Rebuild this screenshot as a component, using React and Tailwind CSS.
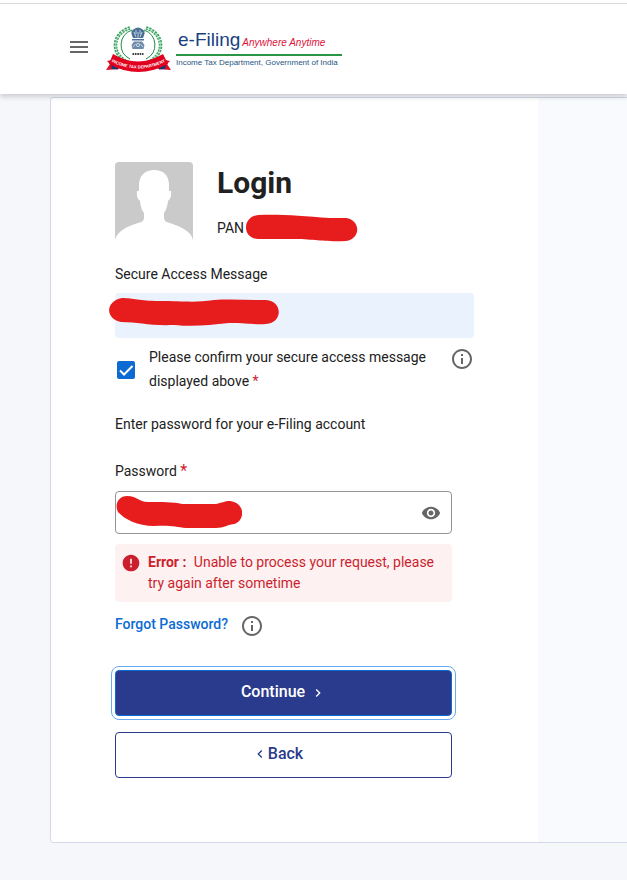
import { MdChevronLeft, MdChevronRight, MdError, MdInfoOutline, MdMenu, MdVisibility } from "react-icons/md";

function Wreath() {
  return (
    <g fill="none">
      <path d="M24 2 A20 18 0 0 0 22 36" stroke="#3aa35f" strokeWidth="3.6" strokeDasharray="2.2 1" />
      <path d="M40 2 A20 18 0 0 1 42 36" stroke="#3aa35f" strokeWidth="3.6" strokeDasharray="2.2 1" />
      <path d="M24 2 A20 18 0 0 0 22 36 M40 2 A20 18 0 0 1 42 36" stroke="#b9dfc6" strokeWidth="0.8" />
      <path d="M26 4 A17 16 0 0 0 24 33 M38 4 A17 16 0 0 1 40 33" stroke="#1f8a48" strokeWidth="1" />
    </g>
  );
}

function Emblem() {
  return (
    <svg viewBox="0 0 66 47" className="h-[47px] w-[66px] shrink-0" role="img" aria-label="Income Tax Department emblem">
      <Wreath />
      <g fill="#4a6f95">
        <path d="M28 3 Q32 0 36 3 L38.5 5 V8 L37 12 H27 L25.500 8 V5Z" />
        <path d="M26 13 H38 V14.500 H26Z" />
        <path d="M28 15.500 H36 L38.500 19 L37.500 23 H26.500 L25.500 19Z" opacity="0.8" />
      </g>
      <g fill="none" stroke="#dbe6f0" strokeWidth="0.8">
        <path d="M30 4 V8 M34 4 V8 M28 6 L30 11 M36 6 L34 11 M32 6 V12" />
        <circle cx="32" cy="19" r="1.6" />
        <path d="M27 21 L29.500 18 M37 21 L34.500 18" />
      </g>
      <path d="M26.500 28 H37.500" stroke="#3b3b3b" strokeWidth="2" strokeDasharray="1.6 .8" />
      <path d="M0 44 L4 38 L1 35 L10 33 L13 43Z M65 44 L61 38 L64 35 L55 33 L52 43Z" fill="#d80f28" />
      <path d="M5 38 L12 40 L12 43.500 L6 43Z M60 38 L53 40 L53 43.500 L59 43Z" fill="#123a72" />
      <path d="M7 28 Q32 43 57 28 L62 38 Q32 54 3 38Z" fill="#e2001f" />
      <path id="ribbon-line" d="M4 35 Q32 50 61 35" fill="none" />
      <text fontFamily="Liberation Sans, sans-serif" fontSize="4.2" fontWeight="700" fill="#fff" textAnchor="middle">
        <textPath href="#ribbon-line" startOffset="50%">INCOME TAX DEPARTMENT</textPath>
      </text>
    </svg>
  );
}

function Header() {
  return (
    <header className="relative z-10 bg-white pt-[3px] shadow-[0_3px_5px_rgba(0,0,0,0.16)]">
      <div className="flex h-[91px] items-center border-t border-[#dcdcdf] pl-[67px]">
        <button type="button" aria-label="Menu" className="mt-[-4px] text-[#666]">
          <MdMenu size={24} />
        </button>
        <a href="#" className="ml-[15px] flex items-center gap-1">
          <Emblem />
          <span className="flex flex-col font-['Liberation_Sans',Arial,sans-serif] whitespace-nowrap">
            <span className="flex items-baseline gap-[2px] border-b-2 border-[#2a9447] pl-[2px] leading-[22px]">
              <span className="text-[19px] text-[#17417f]">e-Filing</span>
              <span className="text-[10px] text-[#e0103a] italic">Anywhere Anytime</span>
            </span>
            <span className="pr-1 text-[8px] leading-[14px] text-[#1f5583]">
              Income Tax Department, Government of India
            </span>
          </span>
        </a>
      </div>
    </header>
  );
}

function Avatar() {
  return (
    <svg viewBox="0 0 78 78" className="size-[78px] shrink-0" role="img" aria-label="Profile picture">
      <path d="M0 78 V4 Q0 0 4 0 H74 Q78 0 78 4 V78Z" fill="#cacaca" />
      <path
        d="M0 78 C2 69 13 64 23 61 Q29 60 29 56 V51 Q26 48 25 39 Q21 36 22 29 L24 29 V23 C24 13 31 8 39 8 C48 8 54 13 54 23 V29 L56 29 Q57 36 53 39 Q52 47 49 51 V56 Q49 60 55 61 C66 65 76 69 78 78Z"
        fill="#fff"
      />
    </svg>
  );
}

function Login() {
  return (
    <form className="w-[487px] max-w-full shrink-0 bg-white p-16" onSubmit={(e) => e.preventDefault()}>
      <div className="flex gap-6">
        <Avatar />
        <div>
          <h1 className="text-[30px] leading-[42px] font-bold">Login</h1>
          <p className="relative mt-3">
            PAN
            <svg viewBox="0 0 112 28" className="absolute top-[-2px] left-[29px] h-7 w-28" aria-hidden="true">
              <path d="M12 1 C35 0 55 2 84 4 H100 C115 6 115 25 100 27 C75 28 70 25 45 25 H12 C-4 24 -4 3 12 1Z" fill="#e71d1d" />
            </svg>
          </p>
        </div>
      </div>

      <p className="mt-[22px]">Secure Access Message</p>
      <div className="relative mt-[7px] h-[45px] rounded bg-[#eaf3fd]">
        <svg viewBox="0 0 170 28" className="absolute top-[5px] left-[-6px] h-7 w-[170px]" aria-hidden="true">
          <path d="M13 0 C25 0 30 3 50 3 C75 3 85 5 105 2 C120 1 140 2 157 2 C174 3 174 25 157 26 C145 27 140 25 120 25 C100 27 85 29 65 27 C40 28 30 24 12 24 C-4 21 -4 3 13 0Z" fill="#e71d1d" />
        </svg>
      </div>

      <div className="mt-[7px] flex items-start">
        <span className="relative mt-4 ml-[2px] flex size-[18px] shrink-0">
          <input id="confirm" type="checkbox" defaultChecked className="size-[18px] appearance-none rounded-[2px] border-2 border-[#0b6bd3] checked:bg-[#0b6bd3]" />
          <svg viewBox="0 0 18 18" className="pointer-events-none absolute inset-0" aria-hidden="true">
            <path d="M3 9.5 L7 13.5 L15.5 5" fill="none" stroke="#fff" strokeWidth="2" />
          </svg>
        </span>
        <label htmlFor="confirm" className="ml-[14px] w-[290px]">
          Please confirm your secure access message displayed above <span className="text-[#cf2030]">*</span>
        </label>
        <button type="button" aria-label="About the secure access message" className="mt-[2px] ml-auto text-[#666]">
          <MdInfoOutline size={24} />
        </button>
      </div>

      <p className="mt-[19px]">Enter password for your e-Filing account</p>

      <div className="mr-[22px]">
        <label htmlFor="password" className="mt-[23px] block">
          Password <span className="text-base leading-none text-[#cf2030]">*</span>
        </label>
        <div className="relative mt-2 flex h-[43px] items-center rounded border border-[#949494] pr-[10px]">
          <input id="password" type="password" className="h-full min-w-0 flex-1 px-3 outline-none" />
          <button type="button" aria-label="Show password" className="text-[#666]">
            <MdVisibility size={20} />
          </button>
          <svg viewBox="0 0 126 32" className="absolute top-1 left-0 h-8 w-[126px]" aria-hidden="true">
            <path d="M11 0 C22 0 22 6 32 6 C45 6 58 6 66 8 H100 C106 7 108 5 114 5 C130 7 129 25 118 28 C110 29 108 32 100 32 H70 C60 31 55 29 38 30 C22 30 8 23 2 16 C-2 8 3 0 11 0Z" fill="#e71d1d" />
          </svg>
        </div>

        <div role="alert" className="mt-[10px] flex gap-[7px] rounded bg-[#fef1f2] py-2 pr-2 pl-[6px] leading-[21px] text-[#cc1f2d]">
          <MdError size={20} className="mt-[1px] shrink-0" />
          <p>
            <strong className="mr-1 font-bold">Error :</strong> Unable to process your request, please try again after sometime
          </p>
        </div>

        <div className="mt-[10px] flex items-start">
          <a href="#" className="font-medium text-[#0b6bd3]">Forgot Password?</a>
          <button type="button" aria-label="About password recovery" className="mt-[2px] ml-3 text-[#666]">
            <MdInfoOutline size={24} />
          </button>
        </div>

        <button
          type="submit"
          className="mt-8 flex h-[46px] w-full items-center justify-center rounded border border-[#0b6bd3] bg-[#2a3a8c] pb-[3px] text-base font-medium text-white outline outline-offset-3 outline-[#6aaaf0]"
        >
          Continue
          <MdChevronRight size={16} className="mt-[3px] ml-[5px]" />
        </button>
        <button
          type="button"
          className="mt-4 flex h-[46px] w-full items-center justify-center rounded border border-[#2a3a8c] pr-3 pb-[3px] text-base font-medium text-[#2a3a8c]"
        >
          <MdChevronLeft size={16} className="mt-[1px]" />
          Back
        </button>
      </div>
    </form>
  );
}

export default function App() {
  return (
    <div className="min-h-screen bg-[#f5f7fb] font-['Roboto',sans-serif] text-sm leading-6 text-[#212121]">
      <Header />
      <main className="mt-[3px] ml-[50px] flex overflow-hidden rounded-l border border-r-0 border-[#d3d8ea] bg-[#f9fafd]">
        <Login />
      </main>
    </div>
  );
}
